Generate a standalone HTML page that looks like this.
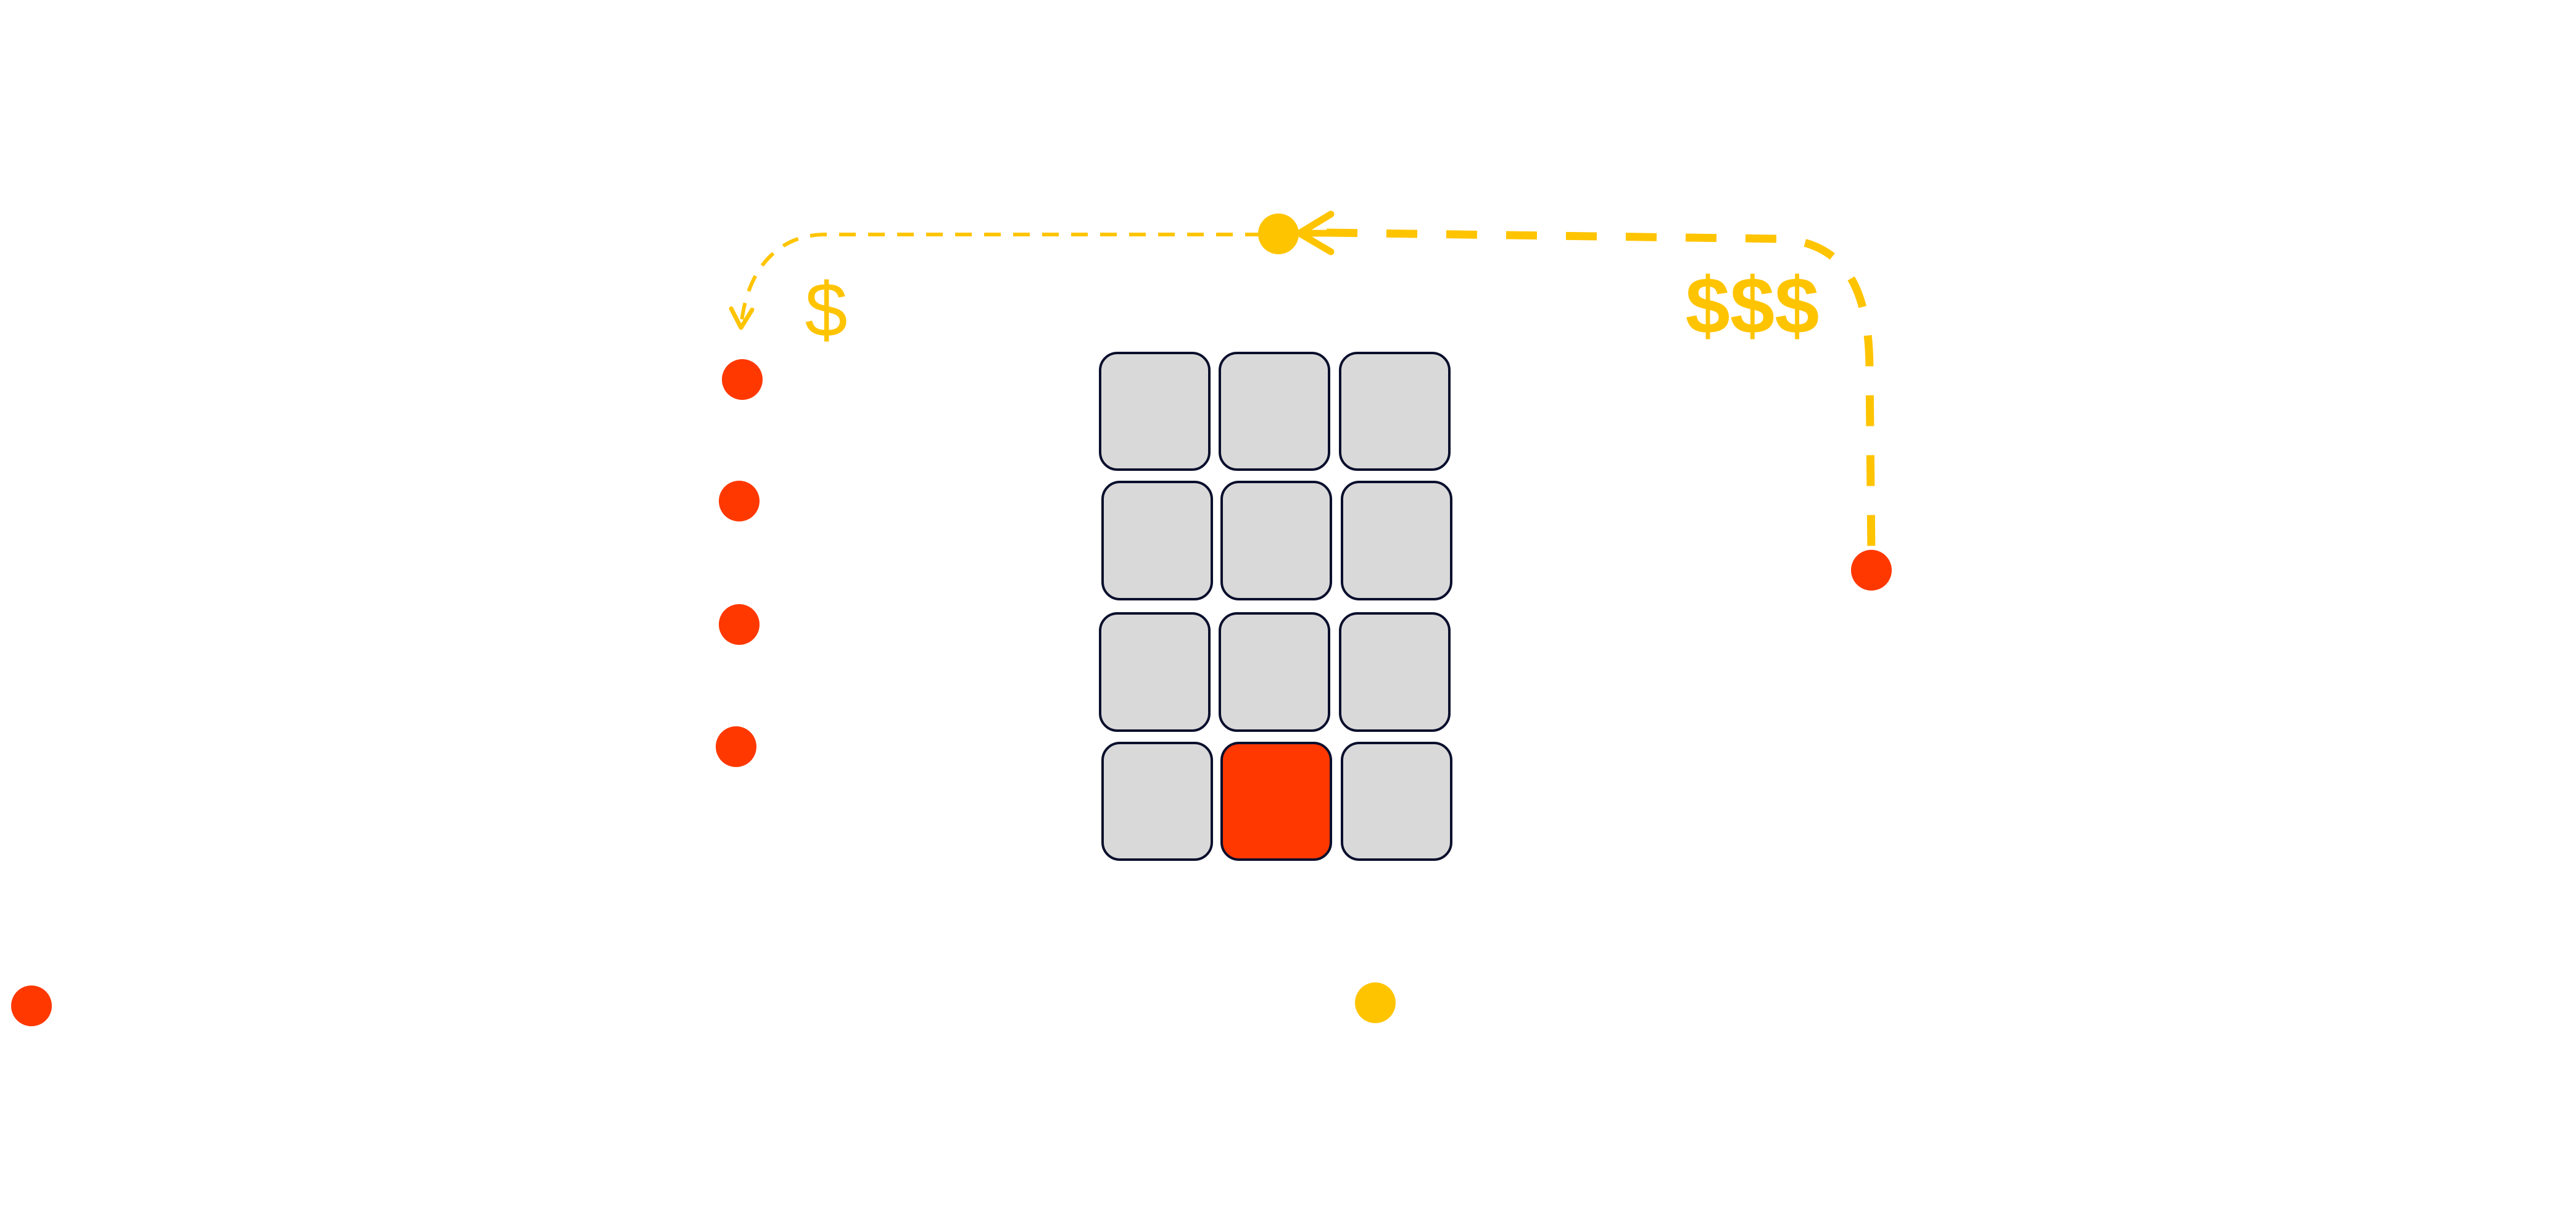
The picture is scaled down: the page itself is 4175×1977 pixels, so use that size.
<!DOCTYPE html>
<html><head><meta charset="utf-8"><style>
html,body{margin:0;padding:0;background:#fff;}
svg{display:block;}
</style></head><body>
<svg width="4175" height="1977" viewBox="0 0 4175 1977" xmlns="http://www.w3.org/2000/svg">
<rect width="4175" height="1977" fill="#fff"/>
<g fill="#d9d9d9" stroke="#0a0f2c" stroke-width="4">
<rect x="1783" y="572" width="177" height="189" rx="28"/>
<rect x="1977" y="572" width="177" height="189" rx="28"/>
<rect x="2172" y="572" width="177" height="189" rx="28"/>
<rect x="1787" y="781" width="177" height="190" rx="28"/>
<rect x="1980" y="781" width="177" height="190" rx="28"/>
<rect x="2175" y="781" width="177" height="190" rx="28"/>
<rect x="1783" y="994" width="177" height="190" rx="28"/>
<rect x="1977" y="994" width="177" height="190" rx="28"/>
<rect x="2172" y="994" width="177" height="190" rx="28"/>
<rect x="1787" y="1204" width="177" height="189" rx="28"/>
<rect x="1980" y="1204" width="177" height="189" rx="28" fill="#ff3800"/>
<rect x="2175" y="1204" width="177" height="189" rx="28"/>
</g>
<g fill="none" stroke="#ffc400" stroke-linejoin="round">
<path d="M2045,380 L1335,380 C1250,382 1208,450 1201,530" stroke-width="6" stroke-dasharray="27 20"/>
<path d="M1185,500 L1201,531 L1219,502" stroke-width="7" stroke-linecap="round"/>
<path d="M2150,377 L2880,387 C2985,390 3030,460 3030,600 L3033,900" stroke-width="13" stroke-dasharray="50 47"/>
<path d="M2157,347 L2106,378 L2157,408" stroke-width="11" stroke-linecap="round"/>
<path d="M2106,378 L2170,378" stroke-width="11"/>
</g>
<g fill="#ff3800">
<circle cx="1203" cy="615" r="33"/>
<circle cx="1198" cy="812" r="33"/>
<circle cx="1198" cy="1012" r="33"/>
<circle cx="1193" cy="1210" r="33"/>
<circle cx="51" cy="1630" r="33"/>
<circle cx="3033" cy="924" r="33"/>
</g>
<g fill="#ffc400">
<circle cx="2229" cy="1625" r="33"/>
<circle cx="2072" cy="379" r="33"/>
</g>
<text x="1339" y="545" text-anchor="middle" font-family="Liberation Sans, sans-serif" font-size="124" fill="#ffc400">$</text>
<text x="2840" y="540" text-anchor="middle" font-family="Liberation Sans, sans-serif" font-weight="bold" font-size="130" fill="#ffc400">$$$</text>
</svg>
</body></html>
